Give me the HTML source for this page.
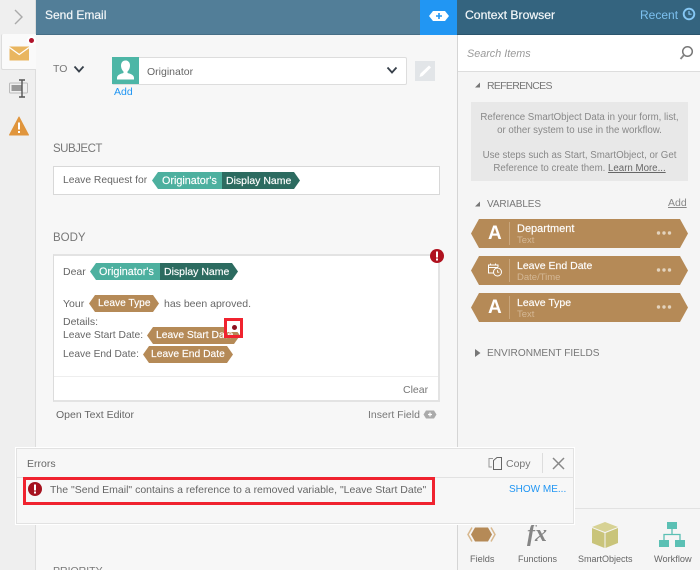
<!DOCTYPE html>
<html><head><meta charset="utf-8"><style>
html,body{margin:0;padding:0;width:700px;height:570px;overflow:hidden}
#r{left:0;top:0;width:700px;height:570px;overflow:hidden;background:#f7f7f7;font-family:"Liberation Sans",sans-serif;font-size:10.5px;color:#666}
div,svg{position:absolute}
.t{white-space:nowrap;line-height:14px}
.h{font-size:11.5px;color:#777;white-space:nowrap;line-height:14px}
.p{height:17px;line-height:18px;color:#fff;white-space:nowrap;font-size:10.4px;box-sizing:border-box;-webkit-text-stroke:.15px #fff}
.tl{background:#4db09f;clip-path:polygon(6px 0,100% 0,100% 100%,6px 100%,0 50%)}
.dk{background:#2c6b60;clip-path:polygon(0 0,calc(100% - 6px) 0,100% 50%,calc(100% - 6px) 100%,0 100%)}
.br{background:#b58a57;clip-path:polygon(6px 0,calc(100% - 6px) 0,100% 50%,calc(100% - 6px) 100%,6px 100%,0 50%)}
.v{left:471px;width:217px;height:29px;background:#b58a57;clip-path:polygon(8px 0,calc(100% - 8px) 0,100% 50%,calc(100% - 8px) 100%,8px 100%,0 50%)}
.box{background:#fff;border:1px solid #ddd;box-sizing:border-box}
</style></head><body><div id="r">
<!-- left rail -->
<div style="left:0;top:0;width:36px;height:570px;background:#efefef;border-right:1px solid #ddd;box-sizing:border-box"></div>
<svg style="left:12px;top:9px" width="14" height="16" viewBox="0 0 14 16"><path d="M3 1l7 7-7 7" fill="none" stroke="#aaa" stroke-width="1.400"/></svg>
<div style="left:1px;top:34px;width:35px;height:36px;background:#fafafa;border:1px solid #ddd;border-right:0;border-top:0;box-sizing:border-box;border-radius:2px 0 0 2px"></div>
<svg style="left:9px;top:46px" width="21" height="15" viewBox="0 0 21 15"><path d="M0.500 0.500H20V14.500H0.500Z" fill="#e9b660"/><path d="M0.500 1.500L10.200 8.500L20 1.500" fill="none" stroke="#fff" stroke-width="1.300"/></svg>
<div style="left:27px;top:36px;width:9px;height:9px;border-radius:50%;background:#fff"></div>
<div style="left:29px;top:38px;width:5px;height:5px;border-radius:50%;background:#b0122a"></div>
<svg style="left:8px;top:79px" width="22" height="20" viewBox="0 0 22 20"><rect x="1.500" y="4" width="18" height="10" rx="1" fill="none" stroke="#bbb" stroke-width="1"/><rect x="3.500" y="6" width="10" height="6" fill="#999"/><path d="M11 1h6M14 1v17M11 18h6" fill="none" stroke="#555" stroke-width="1.400"/></svg>
<svg style="left:9px;top:116px" width="20" height="20" viewBox="0 0 20 20"><path d="M10 1L19.500 19H0.500Z" fill="#e0953c" stroke="#e0953c" stroke-linejoin="round"/><rect x="9" y="6.500" width="2" height="7" fill="#fff"/><rect x="9" y="15" width="2" height="2" fill="#fff"/></svg>

<!-- headers -->
<div style="left:36px;top:0;width:384px;height:35px;background:#527e98;border-bottom:1px solid #466e86;box-sizing:border-box"></div>
<div class="t" style="left:45px;top:8px;color:#f2f6f8;font-size:12px;-webkit-text-stroke:.2px #f2f6f8">Send Email</div>
<div style="left:420px;top:0;width:37px;height:35px;background:#2196f3"></div>
<svg style="left:428px;top:9px" width="22" height="14" viewBox="0 0 22 14"><path d="M5 2H17L21 7L17 12H5L1 7Z" fill="#fff"/><path d="M11 4v6M8 7h6" stroke="#2196f3" stroke-width="1.600"/></svg>
<div style="left:457px;top:0;width:243px;height:35px;background:#34647f;border-bottom:1px solid #2a556d;box-sizing:border-box"></div>
<div class="t" style="left:465px;top:8px;color:#f2f6f8;font-size:12.2px;-webkit-text-stroke:.2px #f2f6f8">Context Browser</div>
<div class="t" style="left:640px;top:8px;color:#7cc0ef;font-size:12px">Recent</div>
<svg style="left:682px;top:7px" width="14" height="14" viewBox="0 0 14 14"><circle cx="7" cy="7" r="5.300" fill="none" stroke="#86c8f5" stroke-width="1.900"/><path d="M7 4v3.200h2.600" fill="none" stroke="#86c8f5" stroke-width="1.200"/></svg>

<!-- right panel -->
<div style="left:457px;top:35px;width:243px;height:535px;background:#f5f5f5;border-left:1px solid #d5d5d5;box-sizing:border-box"></div>
<div style="left:458px;top:35px;width:242px;height:37px;background:#fff;border-bottom:1px solid #ddd;box-sizing:border-box"></div>
<div class="t" style="left:467px;top:47px;font-style:italic;color:#999;font-size:10.8px">Search Items</div>
<svg style="left:679px;top:45px" width="15" height="16" viewBox="0 0 15 16"><circle cx="8.500" cy="6.500" r="4.800" fill="none" stroke="#777" stroke-width="1.500"/><path d="M5 10L1.500 14" stroke="#888" stroke-width="1.800"/></svg>
<svg style="left:474px;top:81px" width="8" height="8" viewBox="0 0 8 8"><path d="M6 1.500V6.500H1Z" fill="#777"/></svg>
<div class="h" style="left:487px;top:79px;font-size:10.500px;letter-spacing:-.7px;line-height:15px">REFERENCES</div>
<div style="left:471px;top:102px;width:217px;height:79px;background:#e8e8e8"></div>
<div class="t" style="left:471px;width:217px;text-align:center;top:112px;color:#888;font-size:9.700px;line-height:12.750px">Reference SmartObject Data in your form, list,<br>or other system to use in the workflow.<br><br>Use steps such as Start, SmartObject, or Get<br>Reference to create them. <u style="color:#666">Learn More...</u></div>
<svg style="left:474px;top:200px" width="8" height="8" viewBox="0 0 8 8"><path d="M6 1.500V6.500H1Z" fill="#777"/></svg>
<div class="h" style="left:487px;top:198px;font-size:10px;letter-spacing:-.1px">VARIABLES</div>
<div class="t" style="left:668px;top:196px;color:#888;text-decoration:underline;font-size:10.5px">Add</div>

<div class="v" style="top:219px"></div>
<div class="v" style="top:256px"></div>
<div class="v" style="top:293px"></div>
<div style="left:509px;top:222px;width:1px;height:23px;background:#c9a67c"></div>
<div style="left:509px;top:259px;width:1px;height:23px;background:#c9a67c"></div>
<div style="left:509px;top:296px;width:1px;height:23px;background:#c9a67c"></div>
<div class="t" style="left:488px;top:224px;color:#fff;font-size:19px;line-height:19px;font-weight:bold">A</div>
<div class="t" style="left:488px;top:298px;color:#fff;font-size:19px;line-height:19px;font-weight:bold">A</div>
<svg style="left:487px;top:262px" width="16" height="16" viewBox="0 0 16 16"><path d="M7 11H1.500V3H11V5M1.500 5.500H11M3.500 1.500V3M8.500 1.500V3" fill="none" stroke="#fff" stroke-width="1"/><circle cx="10.500" cy="10" r="4" fill="#b58a57" stroke="#fff" stroke-width="1"/><path d="M10.500 8v2.200h1.800" fill="none" stroke="#fff" stroke-width=".8"/></svg>
<div class="t" style="left:517px;top:222px;color:#fff;font-size:11px;-webkit-text-stroke:.15px #fff">Department</div>
<div class="t" style="left:517px;top:234px;color:#d4b896;font-size:9.500px">Text</div>
<div class="t" style="left:517px;top:259px;color:#fff;-webkit-text-stroke:.15px #fff">Leave End Date</div>
<div class="t" style="left:517px;top:271px;color:#d4b896;font-size:9.500px">Date/Time</div>
<div class="t" style="left:517px;top:296px;color:#fff;-webkit-text-stroke:.15px #fff">Leave Type</div>
<div class="t" style="left:517px;top:308px;color:#d4b896;font-size:9.500px">Text</div>
<svg style="left:656px;top:231px" width="16" height="4"><circle cx="2.500" cy="2" r="1.700" fill="#e3d3bd"/><circle cx="8" cy="2" r="1.700" fill="#e3d3bd"/><circle cx="13.500" cy="2" r="1.700" fill="#e3d3bd"/></svg>
<svg style="left:656px;top:268px" width="16" height="4"><circle cx="2.500" cy="2" r="1.700" fill="#e3d3bd"/><circle cx="8" cy="2" r="1.700" fill="#e3d3bd"/><circle cx="13.500" cy="2" r="1.700" fill="#e3d3bd"/></svg>
<svg style="left:656px;top:305px" width="16" height="4"><circle cx="2.500" cy="2" r="1.700" fill="#e3d3bd"/><circle cx="8" cy="2" r="1.700" fill="#e3d3bd"/><circle cx="13.500" cy="2" r="1.700" fill="#e3d3bd"/></svg>
<svg style="left:474px;top:348px" width="8" height="10" viewBox="0 0 8 10"><path d="M1 1L6.500 5L1 9Z" fill="#777"/></svg>
<div class="h" style="left:487px;top:347px;font-size:10.100px">ENVIRONMENT FIELDS</div>

<!-- bottom tabs -->
<div style="left:458px;top:508px;width:242px;height:1px;background:#e2e2e2"></div>
<svg style="left:467px;top:526px" width="29" height="17" viewBox="0 0 29 17"><path d="M8 1.500H21L25 8.500L21 15.500H8L4 8.500Z" fill="#b58a57"/><path d="M5 1.500L1 8.500L5 15.500M24 1.500L28 8.500L24 15.500" fill="none" stroke="#d8b88e" stroke-width="1.500"/></svg>
<div class="t" style="left:527px;top:522px;font-family:'Liberation Serif',serif;font-style:italic;font-weight:bold;font-size:24px;line-height:24px;color:#858585">fx</div>
<svg style="left:591px;top:521px" width="28" height="28" viewBox="0 0 28 28"><path d="M14 1L27 6L14 11L1 6Z" fill="#d7d294"/><path d="M1 7L13.500 12V27L1 22Z" fill="#c9c47a"/><path d="M27 7L14.500 12V27L27 22Z" fill="#c9c47a"/></svg>
<svg style="left:659px;top:522px" width="26" height="26" viewBox="0 0 26 26"><rect x="8" y="0" width="10" height="7" fill="#5bc0b4"/><rect x="0" y="18" width="10" height="7" fill="#5bc0b4"/><rect x="16" y="18" width="10" height="7" fill="#5bc0b4"/><path d="M13 7v5M5 18v-5.500H21V18" fill="none" stroke="#5bc0b4" stroke-width="1.300"/></svg>
<div class="t" style="left:470px;top:552px;font-size:9.200px;color:#666">Fields</div>
<div class="t" style="left:518px;top:552px;font-size:9px;color:#666">Functions</div>
<div class="t" style="left:578px;top:552px;font-size:9px;color:#666">SmartObjects</div>
<div class="t" style="left:654px;top:552px;font-size:9.200px;color:#666">Workflow</div>

<!-- main form -->
<div class="h" style="left:53px;top:62px;font-size:10.5px">TO</div>
<svg style="left:73px;top:65px" width="12" height="9" viewBox="0 0 12 9"><path d="M1.500 1.500L6 6.500L10.500 1.500" fill="none" stroke="#37404a" stroke-width="1.800"/></svg>
<div class="box" style="left:112px;top:57px;width:295px;height:28px;border-radius:2px"></div>
<div style="left:112px;top:57px;width:27px;height:27px;background:#4db6a6"></div>
<svg style="left:113px;top:59px" width="25" height="23" viewBox="0 0 25 23"><path d="M12.500 1.500c3 0 4.500 2.300 4.500 5s-1.300 5-2.500 6v1.500c3 .8 6.500 1.800 6.500 5v1.500H4v-1.500c0-3.200 3.500-4.200 6.500-5V12.500c-1.200-1-2.500-3.300-2.500-6s1.500-5 4.500-5z" fill="#fff"/></svg>
<div class="t" style="left:147px;top:65px;color:#666">Originator</div>
<div class="t" style="left:114px;top:85px;color:#2196f3;font-size:10.5px">Add</div>
<svg style="left:386px;top:66px" width="12" height="9" viewBox="0 0 12 9"><path d="M1.500 1.500L6 6.500L10.500 1.500" fill="none" stroke="#37404a" stroke-width="1.800"/></svg>
<div style="left:415px;top:61px;width:20px;height:20px;background:#e2e5e8"></div>
<svg style="left:417px;top:63px" width="16" height="16" viewBox="0 0 16 16"><path d="M12 2.500L14 4.500L5.500 13L2.500 14L3.500 10.500Z" fill="#fff"/></svg>

<div class="h" style="left:53px;top:142px;font-size:11.500px;letter-spacing:-.5px">SUBJECT</div>
<div class="box" style="left:53px;top:166px;width:387px;height:29px;border-color:#d8d8d8"></div>
<div class="t" style="left:63px;top:174px;font-size:10.300px">Leave Request for</div>
<div class="p tl" style="left:152px;top:172px;width:70px;padding-left:10px;font-size:10.800px">Originator's</div>
<div class="p dk" style="left:222px;top:172px;width:78px;padding-left:4px;font-size:10.500px">Display Name</div>

<div class="h" style="left:53px;top:231px">BODY</div>
<div class="box" style="left:53px;top:254px;width:387px;height:148px;border:1px solid #dcdcdc;border-top:2px solid #e3e3e3;border-bottom:2px solid #e3e3e3;border-right:2px solid #e3e3e3"></div>
<div style="left:54px;top:376px;width:384px;height:1px;background:#eee"></div>
<svg style="left:430px;top:249px" width="14" height="14" viewBox="0 0 14 14"><circle cx="7" cy="7" r="7" fill="#b0121f"/><rect x="6" y="2.500" width="2" height="6" fill="#fff"/><rect x="6" y="9.500" width="2" height="2" fill="#fff"/></svg>
<div class="t" style="left:63px;top:265px">Dear</div>
<div class="p tl" style="left:90px;top:263px;width:70px;padding-left:9px;font-size:10.800px">Originator's</div>
<div class="p dk" style="left:160px;top:263px;width:78px;padding-left:4px;font-size:10.500px">Display Name</div>
<div class="t" style="left:63px;top:297px">Your</div>
<div class="p br" style="left:89px;top:295px;width:70px;padding-left:9px;font-size:10.200px">Leave Type</div>
<div class="t" style="left:164px;top:297px">has been aproved.</div>
<div class="t" style="left:63px;top:315px">Details:</div>
<div class="t" style="left:63px;top:329px;font-size:10.300px">Leave Start Date:</div>
<div class="p br" style="left:147px;top:327px;width:93px;padding-left:9px;font-size:10.300px">Leave Start Date</div>
<div class="t" style="left:63px;top:348px;font-size:10.200px">Leave End Date:</div>
<div class="p br" style="left:143px;top:346px;width:90px;padding-left:8px;font-size:10.300px">Leave End Date</div>
<div style="left:224px;top:318px;width:19px;height:20px;border:3px solid #f0232f;box-sizing:border-box"></div>
<div style="left:227px;top:321px;width:13px;height:11px;background:#fff"></div>
<div style="left:232px;top:325px;width:5px;height:5px;border-radius:50%;background:#8e1020"></div>
<div class="t" style="left:403px;top:383px;color:#777">Clear</div>
<div class="t" style="left:56px;top:408px">Open Text Editor</div>
<div class="t" style="left:368px;top:408px;color:#777">Insert Field</div>
<svg style="left:423px;top:410px" width="14" height="9" viewBox="0 0 14 9"><path d="M3 .5H11L13.500 4.500L11 8.500H3L.5 4.500Z" fill="#aaa"/><path d="M7 2.500v4M5 4.500h4" stroke="#fff" stroke-width="1.200"/></svg>
<div class="h" style="left:53px;top:564px;font-size:10.500px">PRIORITY</div>

<!-- errors -->
<div style="left:16px;top:448px;width:558px;height:76px;background:#f7f7f7;border:1px solid #e2e2e2;box-shadow:0 0 0 1px #fff;box-sizing:border-box"></div>
<div style="left:17px;top:477px;width:556px;height:1px;background:#e2e2e2"></div>
<div class="t" style="left:27px;top:457px;color:#666">Errors</div>
<svg style="left:488px;top:456px" width="15" height="15" viewBox="0 0 15 15"><path d="M5 2.500H1V11H4" fill="none" stroke="#999" stroke-width="1"/><path d="M5.500 4.500L9 1.500H13.500V13.500H5.500Z" fill="#f7f7f7" stroke="#666" stroke-width="1"/></svg>
<div class="t" style="left:506px;top:457px;color:#777">Copy</div>
<div style="left:542px;top:453px;width:1px;height:20px;background:#ddd"></div>
<svg style="left:552px;top:457px" width="13" height="13" viewBox="0 0 13 13"><path d="M1 1L12 12M12 1L1 12" stroke="#888" stroke-width="1.500"/></svg>
<div style="left:23px;top:477px;width:412px;height:28px;border:3px solid #f0232f;box-sizing:border-box"></div>
<svg style="left:28px;top:482px" width="14" height="14" viewBox="0 0 14 14"><circle cx="7" cy="7" r="7" fill="#a5121f"/><rect x="6" y="2.500" width="2" height="6" fill="#fff"/><rect x="6" y="9.500" width="2" height="2" fill="#fff"/></svg>
<div class="t" style="left:50px;top:483px;color:#666">The "Send Email" contains a reference to a removed variable, "Leave Start Date"</div>
<div class="t" style="left:509px;top:483px;color:#2196f3;font-size:10px">SHOW ME...</div>
</div></body></html>
